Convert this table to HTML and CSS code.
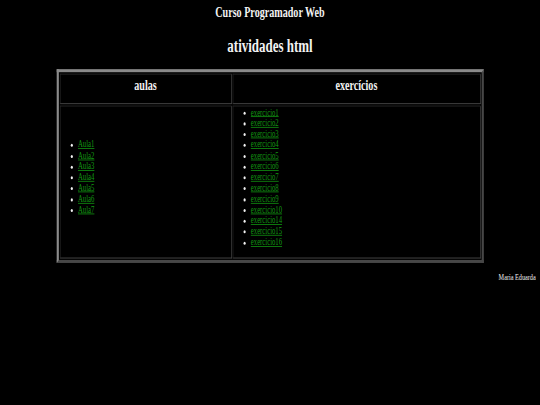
FILE: index.html
```html
<!DOCTYPE html>
<html lang="pt-br">
<head>
<meta charset="utf-8">
<title>atividades html</title>
<link rel="stylesheet" href="styles.css">
</head>
<body>
<div class="viewport">
<div class="page">
  <p class="course">Curso Programador Web</p>
  <h1 class="title">atividades html</h1>
  <table class="grid">
    <tr>
      <th class="col-aulas">aulas</th>
      <th>exercícios</th>
    </tr>
    <tr>
      <td class="col-aulas">
        <ul class="links">
          <li><a href="#">Aula1</a></li>
          <li><a href="#">Aula2</a></li>
          <li><a href="#">Aula3</a></li>
          <li><a href="#">Aula4</a></li>
          <li><a href="#">Aula5</a></li>
          <li><a href="#">Aula6</a></li>
          <li><a href="#">Aula7</a></li>
        </ul>
      </td>
      <td>
        <ul class="links">
          <li><a href="#">exercicio1</a></li>
          <li><a href="#">exercicio2</a></li>
          <li><a href="#">exercicio3</a></li>
          <li><a href="#">exercicio4</a></li>
          <li><a href="#">exercicio5</a></li>
          <li><a href="#">exercicio6</a></li>
          <li><a href="#">exercicio7</a></li>
          <li><a href="#">exercicio8</a></li>
          <li><a href="#">exercicio9</a></li>
          <li><a href="#">exercicio10</a></li>
          <li><a href="#">exercicio14</a></li>
          <li><a href="#">exercicio15</a></li>
          <li><a href="#">exercicio16</a></li>
        </ul>
      </td>
    </tr>
  </table>
  <p class="author">Maria Eduarda</p>
</div>
</div>
</body>
</html>
```

FILE: styles.css
```css
html, body {
  margin: 0;
  height: 100%;
  background: #000;
  overflow: hidden;
}

.viewport {
  width: 100%;
  height: 100%;
  overflow: hidden;
  contain: paint;
}

.page {
  width: 1000px;
  box-sizing: border-box;
  padding: 5px 8px 0;
  transform: scale(0.54, 0.76);
  transform-origin: 0 0;
  font-family: "Liberation Serif", "Times New Roman", serif;
  color: #f2f2f2;
}

.course {
  margin: 0;
  text-align: center;
  font-size: 18.72px;
  line-height: 21.5px;
  font-weight: bold;
}

.title {
  margin: 20px 0 17px;
  text-align: center;
  font-size: 24px;
  line-height: 27.6px;
  font-weight: bold;
}

.grid {
  width: 791px;
  margin: 0 auto;
  border: 4px solid;
  border-color: #8a8a8a #474747 #474747 #8a8a8a;
  border-spacing: 2px;
}

.grid th,
.grid td {
  border: 1px solid;
  border-color: #2e2e2e #575757 #575757 #2e2e2e;
  padding: 1px;
  vertical-align: middle;
}

.grid th {
  font-size: 18.72px;
  line-height: 21.5px;
  padding: 3px 1px 13px;
}

.col-aulas {
  width: 314px;
}

.links {
  margin: 0 0 12px;
  padding-left: 32px;
  font-size: 12.4px;
  line-height: 14.25px;
}

.links a {
  color: #129a12;
}

.author {
  margin: 12px 0 0;
  text-align: right;
  font-size: 11.5px;
  line-height: 13.2px;
}
```
